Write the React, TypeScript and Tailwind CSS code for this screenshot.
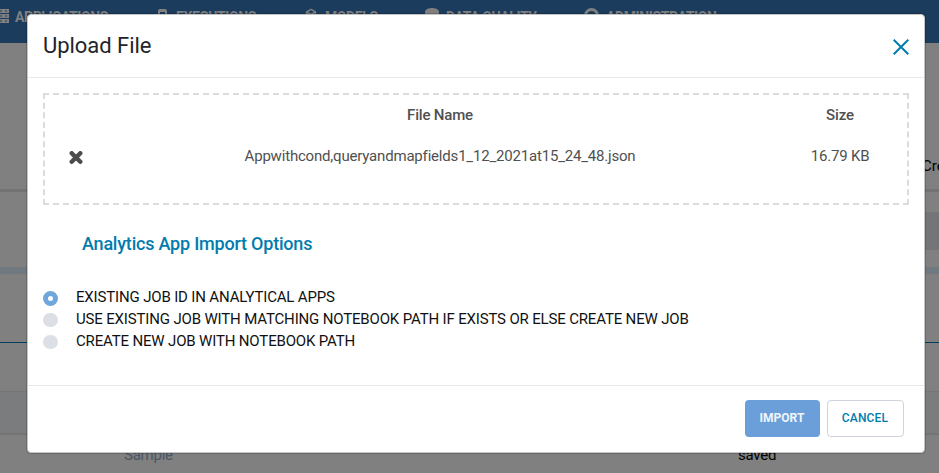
import { Box } from "lucide-react";

const options = [
  "EXISTING JOB ID IN ANALYTICAL APPS",
  "USE EXISTING JOB WITH MATCHING NOTEBOOK PATH IF EXISTS OR ELSE CREATE NEW JOB",
  "CREATE NEW JOB WITH NOTEBOOK PATH",
];

function NavBar() {
  return (
    <nav className="flex h-[43px] shrink-0 overflow-hidden bg-[#1b3c5c] pt-[9px] text-[14px] leading-4 font-bold tracking-[-0.4px] whitespace-nowrap text-[#808080]">
      <div className="flex w-[158px] shrink-0 gap-[6px]">
        <svg className="-ml-[5px] h-[14px] w-[14px] shrink-0" viewBox="0 0 14 14" fill="#808080">
          <path d="M0 0h14v4H0zM0 5h14v4H0zM0 10h14v4H0z" />
          <path d="M2 2h5M2 7h5M2 12h5M10 2h2M10 7h2M10 12h2" stroke="#1b3c5c" />
        </svg>
        <span>APPLICATIONS</span>
      </div>
      <div className="flex w-[147px] shrink-0 gap-[9px]">
        <span className="h-3 w-[9px] rounded-[2px] border-2 border-t-[3px] border-[#808080]" />
        <span>EXECUTIONS</span>
      </div>
      <div className="flex w-[120px] shrink-0 gap-[8px]">
        <Box className="-mt-px h-[13px] w-[12px]" strokeWidth={3} />
        <span>MODELS</span>
      </div>
      <div className="flex w-[159px] shrink-0 gap-[7px]">
        <span className="-mt-px h-3 w-[14px] rounded-[50%/30%] bg-[#808080]" />
        <span>DATA QUALITY</span>
      </div>
      <div className="flex gap-[7px]">
        <span className="-mt-px h-[15px] w-[15px] rounded-full border-[3px] border-[#808080]" />
        <span>ADMINISTRATION</span>
      </div>
    </nav>
  );
}

function Backdrop() {
  return (
    <div className="flex h-full flex-col">
      <NavBar />
      <div className="flex h-[146px] shrink-0 justify-end overflow-hidden pt-[113px]">
        <span className="w-[17px] text-[15px] leading-5 text-black">Cre</span>
      </div>
      <div className="h-[3px] shrink-0 bg-[#737373]" />
      <div className="flex h-[75px] shrink-0 justify-end pt-5">
        <div className="h-[38px] w-[40px] bg-[#737578]" />
      </div>
      <div className="h-[7px] shrink-0 bg-[#70797f]" />
      <div className="h-[68px] shrink-0" />
      <div className="h-px shrink-0 bg-[#013f5c]" />
      <div className="h-[48px] shrink-0" />
      <div className="h-[44px] shrink-0 border-t border-b-2 border-[#747576] bg-[#7a7c7e]" />
      <div className="flex pt-[10px] text-[15px] leading-5 tracking-[-0.25px]">
        <span className="ml-[124px] w-[614px] text-[#4c5663]">Sample</span>
        <span className="text-black">saved</span>
      </div>
    </div>
  );
}

function UploadDialog() {
  return (
    <section
      role="dialog"
      className="absolute top-[14px] left-[27px] flex h-[439px] w-[898px] flex-col rounded-[4px] border border-[#c6c6c6] bg-white shadow-[0_0_1px_1px_rgba(0,0,0,0.18)]"
    >
      <header className="flex h-[63px] shrink-0 items-center justify-between border-b border-[#e9e9e9] pr-[15px] pl-[15px]">
        <h1 className="text-[22px] leading-8 tracking-[-0.04px] text-[#212529]">Upload File</h1>
        <button aria-label="Close" className="mt-px">
          <svg width="16" height="16" viewBox="0 0 16 16" fill="none" stroke="#017cad" strokeWidth="2">
            <path d="M.7.7 15.3 15.3M15.3.7.7 15.3" />
          </svg>
        </button>
      </header>
      <div className="flex grow flex-col px-[15px] pt-[15px]">
        <div className="grid h-[112px] grid-cols-[62px_666px_134px] grid-rows-[39px_44px] border-2 border-dashed border-[#dcdcdc] text-center text-[15px] leading-5 tracking-[-0.19px] text-[#505050]">
          <span />
          <strong className="pt-[10px] font-medium">File Name</strong>
          <strong className="pt-[10px] font-medium tracking-[-0.05px]">Size</strong>
          <span className="flex pt-[17px] pl-[24px]">
            <svg width="14" height="14" viewBox="0 0 14 14" stroke="#4c4c4c" strokeWidth="4.4" strokeLinecap="round">
              <path d="m2.7 2.2 8.6 8.6m0-8.6-8.6 8.6" />
            </svg>
          </span>
          <span className="pt-[12px]">Appwithcond,queryandmapfields1_12_2021at15_24_48.json</span>
          <span className="pt-[12px]">16.79 KB</span>
        </div>
        <h2 className="mt-[27px] ml-[39px] text-[18px] leading-6 font-medium tracking-[-0.21px] text-[#017cad]">
          Analytics App Import Options
        </h2>
        <div className="mt-[30px] flex flex-col">
          {options.map((label, i) => (
            <label key={label} className="flex h-[22px] items-start text-[15px] leading-[22px] tracking-[-0.16px] whitespace-nowrap text-[#111]">
              {i === 0 ? (
                <span className="mt-[5px] h-[15px] w-[15px] rounded-full border-[5px] border-[#6fa6dc] bg-white" />
              ) : (
                <span className="mt-[5px] h-[14px] w-[15px] rounded-full bg-[#dce0e6]" />
              )}
              <span className="ml-[18px]">{label}</span>
            </label>
          ))}
        </div>
      </div>
      <footer className="flex h-[67px] shrink-0 justify-end gap-[7px] border-t border-[#e9e9e9] pt-[14px] pr-[20px] text-[12px]">
        <button className="h-[37px] w-[75px] rounded-[4px] bg-[#6a9fd9] pr-px pb-[2px] font-bold text-white/90">IMPORT</button>
        <button className="h-[37px] w-[77px] rounded-[4px] border border-[#ced3dc] pr-px pb-[2px] font-medium tracking-[0.15px] text-[#017cad]">CANCEL</button>
      </footer>
    </section>
  );
}

export default function App() {
  return (
    <main className="relative h-[473px] w-[939px] overflow-hidden bg-[#808080] font-[Roboto,sans-serif]">
      <Backdrop />
      <UploadDialog />
    </main>
  );
}
